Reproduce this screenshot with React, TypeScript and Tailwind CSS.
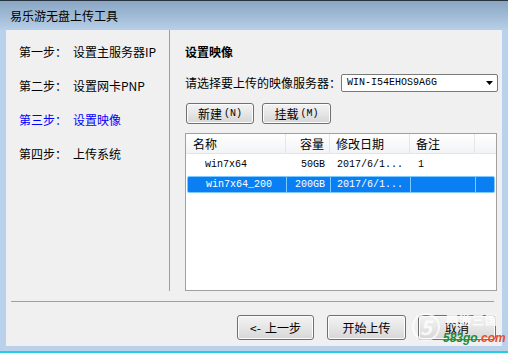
export default function App() {
  const cjk = "font-['Noto_Sans_CJK_SC',sans-serif]";
  const mono = "font-['Liberation_Mono','Noto_Sans_CJK_SC',monospace]";
  const btn =
    "flex items-center justify-center rounded-[3px] border border-[#707070] bg-gradient-to-b from-[#f3f3f3] via-[#e6e6e6] to-[#d6d6d6] text-[12px] text-black shadow-[inset_0_0_0_1px_#fcfcfc]";
  return (
    <div className={`relative w-[508px] h-[353px] overflow-hidden bg-[#b9d1ea] ${cjk}`}>
      {/* title bar */}
      <div className="h-[30px] border-t border-[#27343f] bg-gradient-to-b from-[#8aa6c3] to-[#b7cfe8] flex items-center pl-[10px]">
        <span className="text-[12px] leading-[14px] text-black">易乐游无盘上传工具</span>
      </div>
      {/* client */}
      <div className="ml-[6px] w-[496px] h-[316px] bg-[#f0f0f0] flex flex-col">
        <div className="flex h-[261px]">
          {/* left steps */}
          <div className="w-[163px] pt-[5px] pl-[13px] flex flex-col text-[12px] leading-[14px]">
            {[
              ["第一步：", "设置主服务器IP", false],
              ["第二步：", "设置网卡PNP", false],
              ["第三步：", "设置映像", true],
              ["第四步：", "上传系统", false],
            ].map(([a, b, active]) => (
              <div
                key={a as string}
                className={`h-[34px] flex items-center ${active ? "text-[#0000ff]" : "text-black"}`}
              >
                <span className="w-[54px]">{a}</span>
                <span>{b}</span>
              </div>
            ))}
          </div>
          <div className="w-px bg-[#a0a0a0]" />
          {/* right panel */}
          <div className="flex-1 pl-[15px] flex flex-col text-[12px]">
            <div className="mt-[15px] h-[14px] leading-[14px] font-bold text-black">设置映像</div>
            <div className="mt-[15px] h-[18px] flex items-center">
              <span className="w-[156px] leading-[14px]">请选择要上传的映像服务器：</span>
              <div className="w-[157px] h-[18px] border border-[#7a7a7a] rounded-[2px] bg-white flex items-center pl-[5px] pr-[4px]">
                <span className={`${mono} text-[10px] leading-[12px] flex-1`}>WIN-I54EHOS9A6G</span>
                <svg width="7" height="4" viewBox="0 0 7 4">
                  <path d="M0 0H7L3.5 4Z" fill="#000" />
                </svg>
              </div>
            </div>
            <div className="mt-[11px] ml-[1px] flex gap-[8px]">
              <div className={`${btn} w-[68px] h-[21px]`}>
                新建<span className={`${mono} text-[10px] ml-[2px]`}>(N)</span>
              </div>
              <div className={`${btn} w-[69px] h-[21px]`}>
                挂载<span className={`${mono} text-[10px] ml-[2px]`}>(M)</span>
              </div>
            </div>
            {/* list */}
            <div className="mt-[9px] w-[312px] h-[158px] border border-[#a0a0a0] bg-white flex flex-col">
              <div className="flex h-[20px] border-b border-[#e5e5e5] bg-gradient-to-b from-white to-[#f2f3f5] leading-[19px] text-[12px]">
                <div className="w-[100px] pl-[7px] border-r border-[#e5e5e5]">名称</div>
                <div className="w-[44px] pr-[5px] text-right border-r border-[#e5e5e5]">容量</div>
                <div className="w-[80px] pl-[6px] border-r border-[#e5e5e5]">修改日期</div>
                <div className="w-[65px] pl-[6px] border-r border-[#e5e5e5]">备注</div>
                <div className="flex-1" />
              </div>
              <div className={`${mono} flex h-[20px] items-center text-[10px] text-black`}>
                <div className="w-[100px] pl-[19px]">win7x64</div>
                <div className="w-[44px] pr-[5px] text-right">50GB</div>
                <div className="w-[80px] pl-[7px]">2017/6/1...</div>
                <div className="w-[65px] pl-[8px]">1</div>
              </div>
              <div className="h-[20px] pt-[2px] px-[1px]">
                <div className={`${mono} flex h-[17px] items-center text-[10px] text-white bg-[#0a7ff3] border border-[#7ccaff] rounded-[2px]`}>
                  <div className="w-[99px] pl-[18px] h-full flex items-center border-r border-[#7ccaff]">win7x64_200</div>
                  <div className="w-[44px] pr-[5px] h-full flex items-center justify-end border-r border-[#7ccaff]">200GB</div>
                  <div className="w-[80px] pl-[6px] h-full flex items-center border-r border-[#7ccaff]">2017/6/1...</div>
                  <div className="w-[65px] h-full border-r border-[#7ccaff]" />
                  <div className="flex-1" />
                </div>
              </div>
            </div>
          </div>
        </div>
        {/* separator */}
        <div className="mt-[10px] ml-[5px] w-[483px] h-px bg-[#a0a0a0]" />
        {/* bottom buttons */}
        <div className="mt-[13px] flex justify-end pr-[6px] gap-[13px]">
          <div className={`${btn} w-[77px] h-[25px]`}>
            <span className="mr-[4px]">&lt;-</span>上一步
          </div>
          <div className="flex gap-[12px]">
            <div className={`${btn} w-[79px] h-[25px]`}>开始上传</div>
            <div className={`${btn} w-[78px] h-[25px]`}>取消</div>
          </div>
        </div>
      </div>
      {/* bottom frame edge */}
      <div className="absolute left-0 bottom-0 w-full h-[2px] bg-[#24cde6]" />
      {/* watermark */}
      <div className="absolute left-[412px] top-[313px] w-[28px] h-[28px] rounded-full border-2 border-white/70 flex items-center justify-center text-white/80 text-[20px] font-bold italic leading-none">
        5
      </div>
      <div className="absolute left-[446px] top-[313px] text-[12px] leading-[13px] text-white/80 font-bold tracking-[1px]">网游三国</div>
      <div className="absolute left-[443px] top-[332px] text-[12px] leading-[13px] font-bold italic font-['Liberation_Sans',sans-serif]">
        <span className="text-[#1f8a3a]">583go</span>
        <span className="text-[#e5502a]">.com</span>
      </div>
    </div>
  );
}
